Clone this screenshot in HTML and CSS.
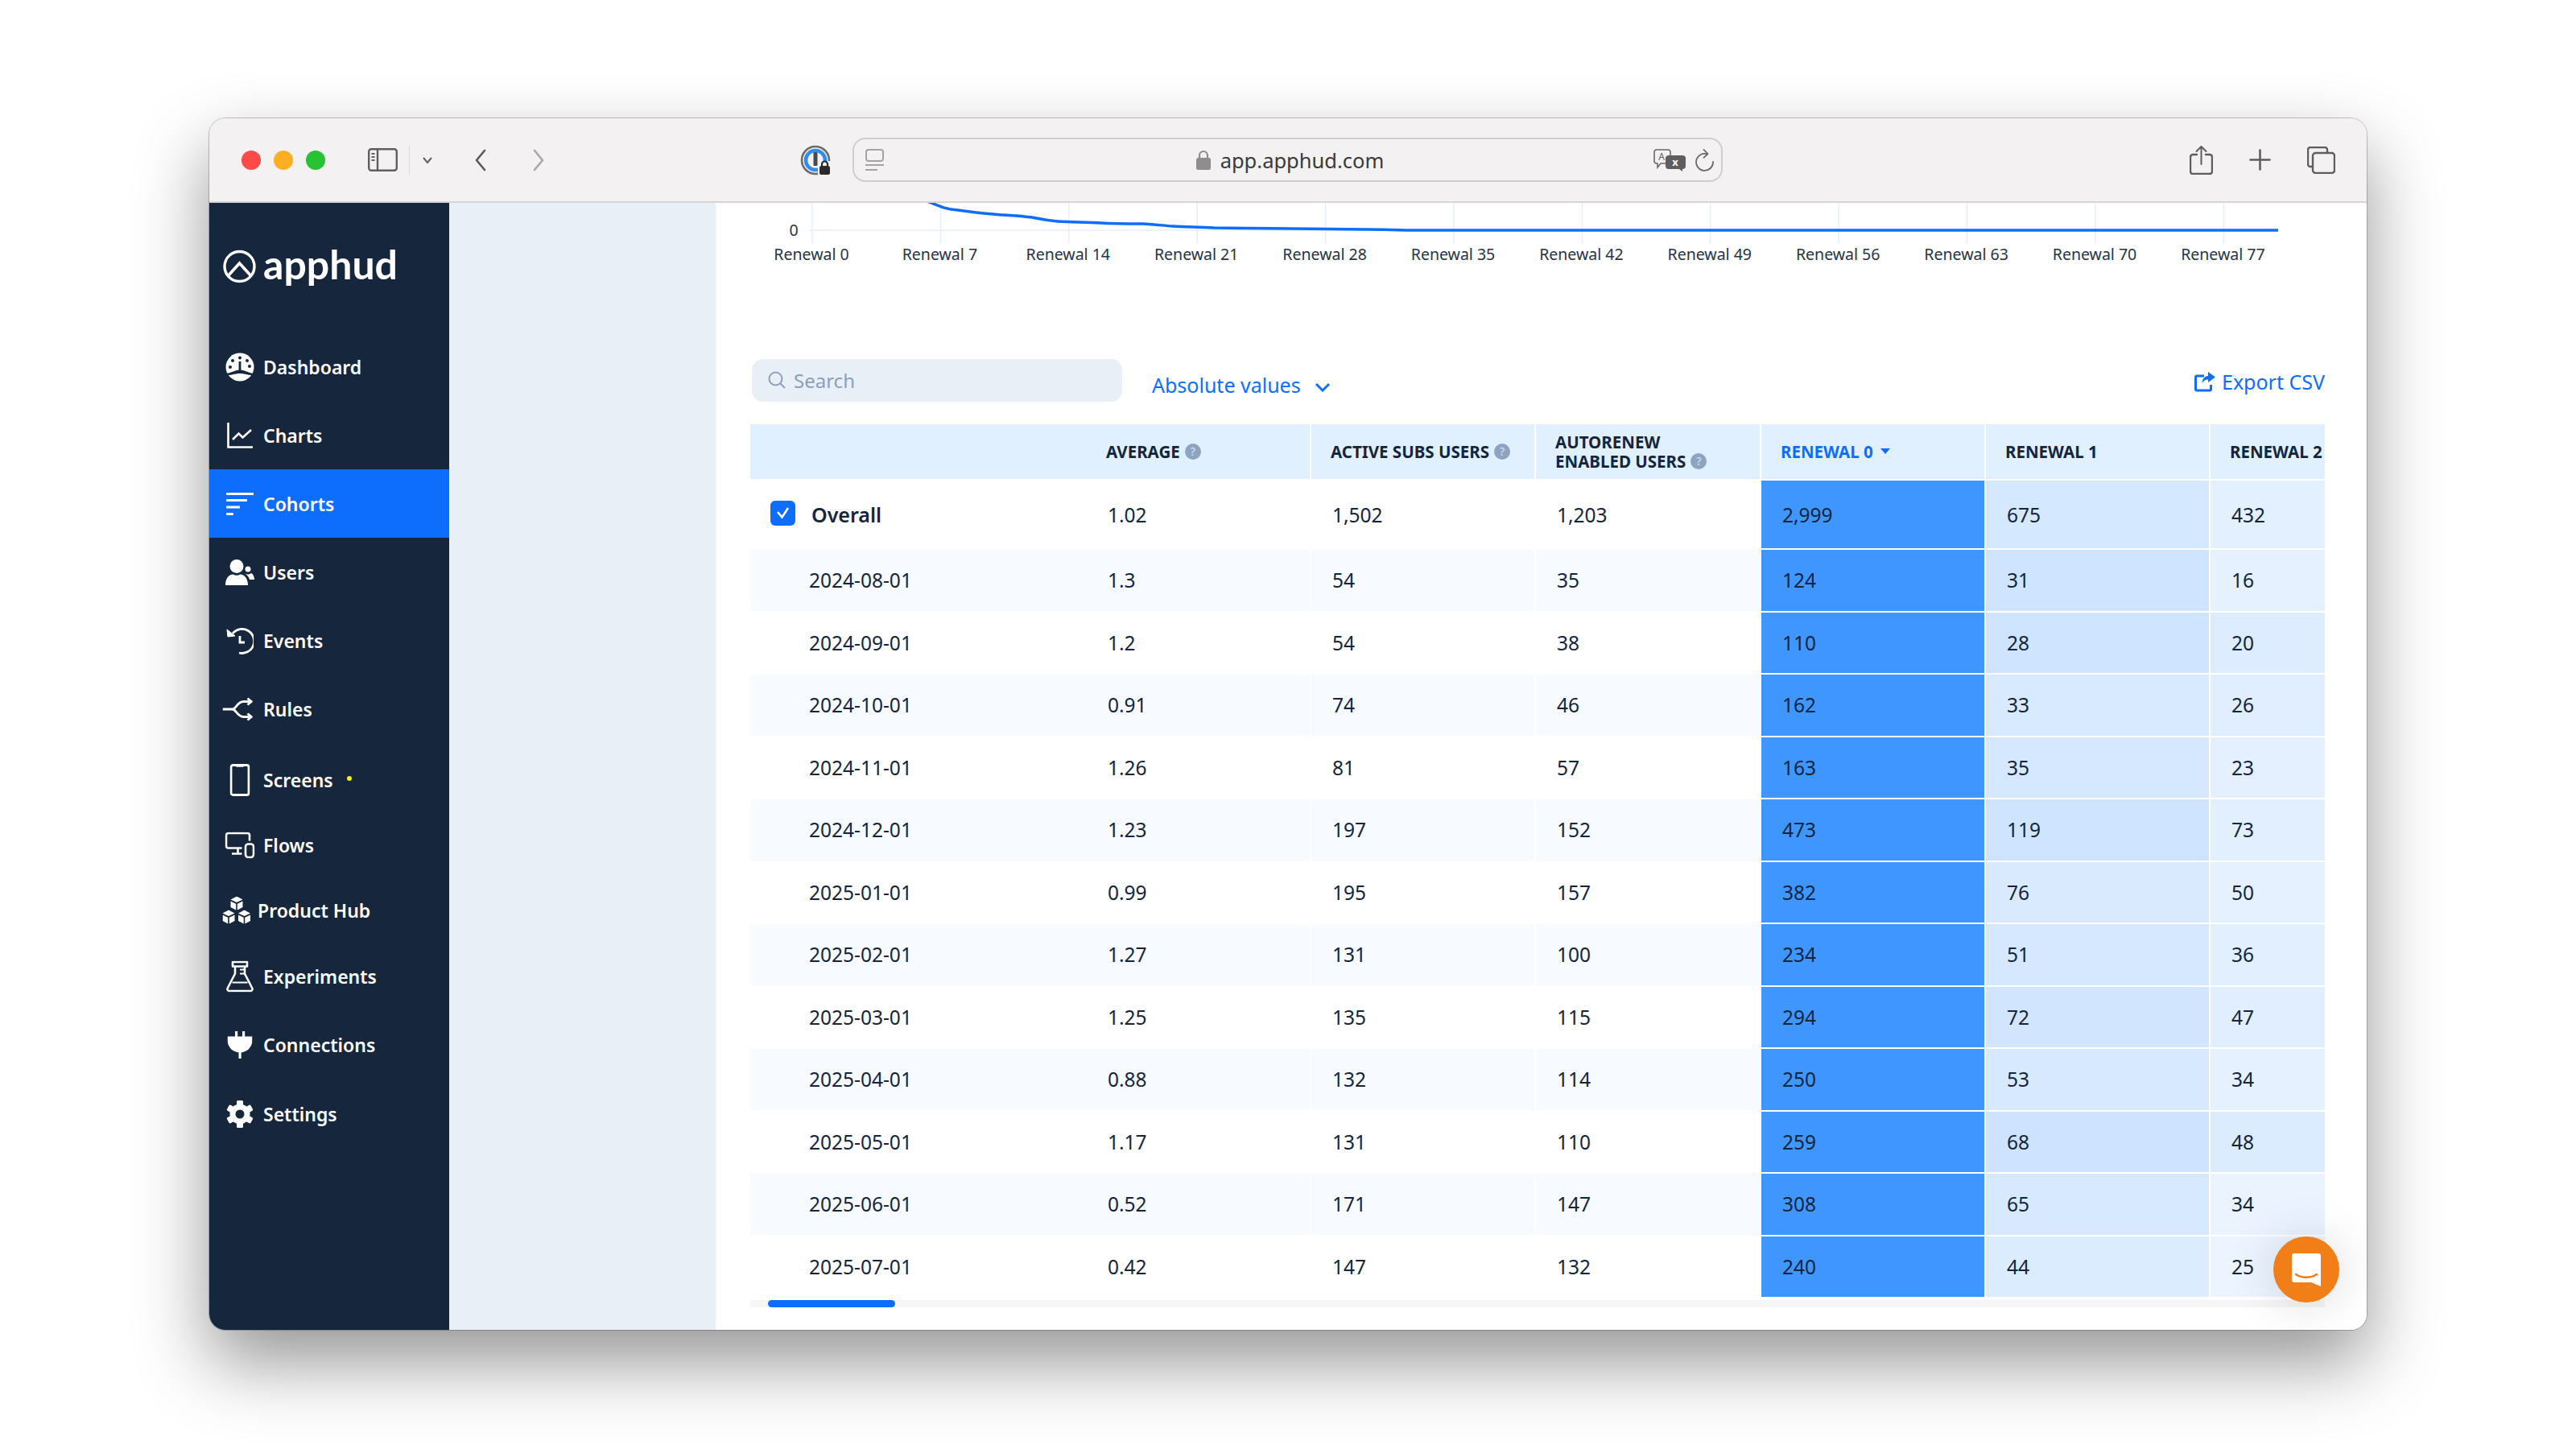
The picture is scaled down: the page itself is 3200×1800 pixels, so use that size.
FILE: index.html
```html
<!DOCTYPE html>
<html lang="en">
<head>
    <meta charset="UTF-8">
    <meta name="viewport" content="width=device-width, initial-scale=1.0">
    <title>Apphud Cohorts</title>
    <link rel="stylesheet" href="styles.css">
</head>
<body>
    <div class="window">
        <header class="toolbar">
            <div class="lights">
                <span class="light light-red"></span>
                <span class="light light-yellow"></span>
                <span class="light light-green"></span>
            </div>
            <svg class="tb-sidebar" width="37" height="29" viewBox="0 0 37 29" fill="none" stroke="#5f5d5d" stroke-width="2.4">
                <rect x="1.2" y="1.2" width="34.6" height="26.6" rx="3"/>
                <path d="M12 1v27"/>
                <path d="M4.5 7h4M4.5 11h4M4.5 15h4" stroke-width="2"/>
            </svg>
            <span class="tb-sep"></span>
            <svg class="tb-caret" width="14" height="10" viewBox="0 0 14 10" fill="none" stroke="#5f5d5d" stroke-width="2"><path d="M2 2l5 6 5-6"/></svg>
            <svg class="tb-back" width="14" height="28" viewBox="0 0 14 28" fill="none" stroke="#5a5858" stroke-width="2.6" stroke-linecap="round" stroke-linejoin="round"><path d="M12 2L2 14l10 12"/></svg>
            <svg class="tb-forward" width="14" height="28" viewBox="0 0 14 28" fill="none" stroke="#a9a7a7" stroke-width="2.6" stroke-linecap="round" stroke-linejoin="round"><path d="M2 2l10 12L2 26"/></svg>
            <svg class="tb-onepass" width="39" height="38" viewBox="0 0 39 38" fill="none">
                <circle cx="19" cy="19" r="17" stroke="#6c6c6c" stroke-width="2.6"/>
                <circle cx="19" cy="19" r="12" stroke="#2d8cf5" stroke-width="4.5"/>
                <rect x="16.5" y="9" width="5" height="17" rx="1" fill="#4a4a4a"/>
                <rect x="22" y="20" width="17" height="18" fill="#f3f1f1"/>
                <path d="M27 27v-3a3.5 3.5 0 0 1 7 0v3" stroke="#2a2a2a" stroke-width="2.2"/>
                <rect x="24" y="26" width="13" height="11" rx="2.5" fill="#2a2a2a"/>
            </svg>
            <div class="urlbar">
                <svg class="reader" width="23" height="27" viewBox="0 0 23 27" fill="none" stroke="#a5a3a3" stroke-width="2">
                    <rect x="1" y="1" width="21" height="14" rx="3"/>
                    <path d="M0 20h23M0 26h15"/>
                </svg>
                <div class="address">
                    <svg width="18" height="25" viewBox="0 0 18 25">
                        <path d="M4 11V7a5 5 0 0 1 10 0v4" fill="none" stroke="#8f8d8d" stroke-width="2.2"/>
                        <rect x="0" y="10" width="18" height="15" rx="2.5" fill="#8f8d8d"/>
                    </svg>
                    <span>app.apphud.com</span>
                </div>
                <div class="url-actions">
                    <svg width="40" height="28" viewBox="0 0 40 28">
                        <path d="M4 1h14a3 3 0 0 1 3 3v11a3 3 0 0 1-3 3H9l-4 5v-5H4a3 3 0 0 1-3-3V4a3 3 0 0 1 3-3z" fill="none" stroke="#6a6868" stroke-width="1.6"/>
                        <text x="10" y="14" class="tr-a">A</text>
                        <path d="M19 8h17a4 4 0 0 1 4 4v9a4 4 0 0 1-4 4v3l-4-3H19a4 4 0 0 1-4-4v-9a4 4 0 0 1 4-4z" fill="#5f5d5d"/>
                        <text x="27" y="21" class="tr-x">x</text>
                    </svg>
                    <svg width="25" height="28" viewBox="0 0 25 28" fill="none" stroke="#6a6868" stroke-width="1.8" stroke-linecap="round" stroke-linejoin="round">
                        <path d="M16 6.5A10.5 10.5 0 1 0 23 16"/>
                        <path d="M11.5 1l5 5.2-5 4.6"/>
                    </svg>
                </div>
            </div>
            <svg class="tb-share" width="29" height="37" viewBox="0 0 29 37" fill="none" stroke="#5f5d5d" stroke-width="2.4" stroke-linecap="round" stroke-linejoin="round">
                <path d="M9 12H4a3 3 0 0 0-3 3v18a3 3 0 0 0 3 3h21a3 3 0 0 0 3-3V15a3 3 0 0 0-3-3h-5"/>
                <path d="M14.5 24V2M8.5 8l6-6 6 6" stroke-width="2"/>
            </svg>
            <svg class="tb-plus" width="27" height="27" viewBox="0 0 27 27" stroke="#5f5d5d" stroke-width="2.6" stroke-linecap="round"><path d="M13.5 1.5v24M1.5 13.5h24"/></svg>
            <svg class="tb-tabs" width="35" height="34" viewBox="0 0 35 34" fill="none" stroke="#5f5d5d" stroke-width="2.4">
                <path d="M6 25H4a3 3 0 0 1-3-3V4a3 3 0 0 1 3-3h18a3 3 0 0 1 3 3v4"/>
                <rect x="7" y="8" width="27" height="25" rx="3.5"/>
            </svg>
        </header>

        <div class="app">
            <aside class="sidebar">
                <div class="logo">
                    <svg width="41" height="42" viewBox="0 0 41 42" fill="none" stroke="#fff">
                        <circle cx="20.5" cy="21" r="18.5" stroke-width="3.4"/>
                        <path d="M6 33L20.5 17 35 33" stroke-width="3.6"/>
                    </svg>
                    <span>apphud</span>
                </div>
                <nav class="nav">
                    <a class="nav-item">
                        <svg width="36" height="36" viewBox="0 0 36 36">
                            <circle cx="18" cy="18" r="17.5" fill="#fff"/>
                            <g fill="#16263d">
                                <circle cx="18" cy="6.5" r="2"/><circle cx="9" cy="10" r="2"/><circle cx="27" cy="10" r="2"/><circle cx="6" cy="18" r="2"/><circle cx="30" cy="17" r="2"/>
                                <rect x="16.6" y="11" width="2.8" height="12"/>
                                <path d="M0 26c7 0 11-4.5 18-4.5S29 26 36 26v2.5c-7 0-11-2.5-18-2.5S7 28.5 0 28.5z"/>
                            </g>
                        </svg>
                        <span>Dashboard</span>
                    </a>
                    <a class="nav-item">
                        <svg width="32" height="32" viewBox="0 0 32 32" fill="none" stroke="#fff" stroke-width="2.6">
                            <path d="M1.5 0v30.5H32"/>
                            <path d="M7 21l7.5-7.5 5 5L30 9"/>
                        </svg>
                        <span>Charts</span>
                    </a>
                    <a class="nav-item is-active">
                        <svg width="36" height="30" viewBox="0 0 36 30" fill="#fff">
                            <rect x="1" y="1" width="34" height="3"/><rect x="1" y="9" width="26" height="3"/><rect x="1" y="17.5" width="17" height="3"/><rect x="1" y="26" width="9" height="3"/>
                        </svg>
                        <span>Cohorts</span>
                    </a>
                    <a class="nav-item">
                        <svg width="36" height="32" viewBox="0 0 36 32" fill="#fff">
                            <circle cx="14" cy="8.5" r="8.5"/>
                            <path d="M0 32c0-8 4-13.5 9.5-13.5Q14 21 18.5 18.5C24 18.5 28 24 28 32z"/>
                            <circle cx="28" cy="12" r="3.5"/>
                            <path d="M23.5 17Q28 20 32 17c2.5 1 4 4.5 4 8h-6c-.5-3-3-6-6.500-8z"/>
                        </svg>
                        <span>Users</span>
                    </a>
                    <a class="nav-item">
                        <svg width="34" height="34" viewBox="0 0 34 34" fill="none" stroke="#fff" stroke-width="2.8">
                            <path d="M8 8A15 15 0 1 1 16 32"/>
                            <path d="M17 11v8h6"/>
                            <path d="M1 3l1 9 9-1z" fill="#fff" stroke-width="1"/>
                        </svg>
                        <span>Events</span>
                    </a>
                    <a class="nav-item nav-rules">
                        <svg width="39" height="29" viewBox="0 0 39 29" fill="none" stroke="#fff" stroke-width="2.8" stroke-linejoin="round">
                            <path d="M0 14.5h13"/>
                            <path d="M12 14.5C17 14.5 18 5 26 5h9M12 14.5C17 14.5 18 24 26 24h9"/>
                            <path d="M31 1l5 4-5 4M31 20l5 4-5 4"/>
                        </svg>
                        <span>Rules</span>
                    </a>
                    <a class="nav-item nav-screens">
                        <svg width="25" height="40" viewBox="0 0 25 40" fill="none" stroke="#fff" stroke-width="2.8">
                            <rect x="1.5" y="1.5" width="22" height="37" rx="2.5"/>
                            <path d="M8 2.5h9" stroke-width="2.4"/>
                        </svg>
                        <span>Screens</span>
                        <i class="dot"></i>
                    </a>
                    <a class="nav-item nav-flows">
                        <svg width="37" height="33" viewBox="0 0 37 33" fill="none" stroke="#fff" stroke-width="2.6">
                            <path d="M21 20H4a2.5 2.5 0 0 1-2.500-2.500V4A2.500 2.500 0 0 1 4 1.500h24A2.500 2.500 0 0 1 30.500 4v7"/>
                            <path d="M16 20v6M8.500 27H21"/>
                            <rect x="25.5" y="15" width="10" height="16.5" rx="3.5"/>
                        </svg>
                        <span>Flows</span>
                    </a>
                    <a class="nav-item nav-hub">
                        <svg width="35" height="35" viewBox="0 0 35 35" fill="#fff">
                            <defs>
                                <g id="cube">
                                    <path d="M0 4L7.5 0 15 4 7.5 7.5z"/>
                                    <path d="M0 6l6.7 3.300V17L0 13.500z"/>
                                    <path d="M15 6L8.300 9.300V17l6.700-3.500z"/>
                                </g>
                            </defs>
                            <use href="#cube" x="10" y="0"/>
                            <use href="#cube" x="0" y="17"/>
                            <use href="#cube" x="19.5" y="17"/>
                        </svg>
                        <span>Product Hub</span>
                    </a>
                    <a class="nav-item nav-experiments">
                        <svg width="34" height="39" viewBox="0 0 34 39" fill="none" stroke="#fff" stroke-width="2.6" stroke-linejoin="round">
                            <path d="M8 1.5h18V7H8z"/>
                            <path d="M11 7v9L2 33.500A2.500 2.500 0 0 0 4.500 37.500h25A2.500 2.500 0 0 0 32 33.500L23 16V7"/>
                            <path d="M7.5 27h19M17 11h6M17 16h6" stroke-width="2.2"/>
                        </svg>
                        <span>Experiments</span>
                    </a>
                    <a class="nav-item nav-tall">
                        <svg width="31" height="34" viewBox="0 0 31 34" fill="#fff">
                            <rect x="9.5" y="0" width="3.2" height="7"/><rect x="18.5" y="0" width="3.2" height="7"/>
                            <path d="M0 6.5h31V11C31 20 24 26.5 15.5 26.5S0 20 0 11z"/>
                            <rect x="14" y="26" width="3.2" height="8"/>
                        </svg>
                        <span>Connections</span>
                    </a>
                    <a class="nav-item nav-tall">
                        <svg width="34" height="34" viewBox="0 0 34 34">
                            <g fill="#fff">
                                <circle cx="17" cy="17" r="12.5"/>
                                <rect x="13" y="0" width="8" height="34" rx="1.5"/>
                                <rect x="13" y="0" width="8" height="34" rx="1.5" transform="rotate(60 17 17)"/>
                                <rect x="13" y="0" width="8" height="34" rx="1.5" transform="rotate(120 17 17)"/>
                            </g>
                            <circle cx="17" cy="17" r="5.5" fill="#16263d"/>
                        </svg>
                        <span>Settings</span>
                    </a>
                </nav>
            </aside>

            <div class="gutter"></div>

            <main class="panel">
                <svg class="chart" width="2051" height="82" viewBox="0 0 2051 82">
                    <g class="grid">
                        <path d="M116 34H1941"/>
                        <path d="M120 0v51M279.400 0v51M438.800 0v51M598.200 0v51M757.600 0v51M917 0v51M1076.400 0v51M1235.800 0v51M1395.200 0v51M1554.600 0v51M1714 0v51M1873.400 0v51"/>
                    </g>
                    <path class="curve" d="M258-4C278 4 285 8 301 9 315 11 330 13 345 14 365 16 380 16 393 18 404 20 410 22 425 23 445 24 460 24 479 25 495 26 515 26 530 26 545 27 555 28 568 29 585 30 600 30 619 31 680 32 750 32 811 33 830 33 850 34 871 34H1941"/>
                    <g class="axis">
                        <text x="97" y="41">0</text>
                        <text x="119" y="71">Renewal 0</text>
                        <text x="278.400" y="71">Renewal 7</text>
                        <text x="437.800" y="71">Renewal 14</text>
                        <text x="597.200" y="71">Renewal 21</text>
                        <text x="756.600" y="71">Renewal 28</text>
                        <text x="916" y="71">Renewal 35</text>
                        <text x="1075.400" y="71">Renewal 42</text>
                        <text x="1234.800" y="71">Renewal 49</text>
                        <text x="1394.200" y="71">Renewal 56</text>
                        <text x="1553.600" y="71">Renewal 63</text>
                        <text x="1713" y="71">Renewal 70</text>
                        <text x="1872.400" y="71">Renewal 77</text>
                    </g>
                </svg>

                <div class="controls">
                    <div class="search">
                        <svg width="22" height="22" viewBox="0 0 22 22" fill="none" stroke="#8ba0bb" stroke-width="2"><circle cx="9.5" cy="9.5" r="8"/><path d="M15 15l6 6"/></svg>
                        <span>Search</span>
                    </div>
                    <a class="mode-select">
                        <span>Absolute values</span>
                        <svg width="20" height="12" viewBox="0 0 20 12" fill="none" stroke="#0d6efd" stroke-width="3"><path d="M2 2l8 8 8-8"/></svg>
                    </a>
                    <a class="export">
                        <svg width="26" height="25" viewBox="0 0 26 25" fill="none" stroke="#0d6efd" stroke-width="3">
                            <path d="M12 5H3a1.5 1.5 0 0 0-1.5 1.5v15A1.5 1.5 0 0 0 3 23h16a1.5 1.5 0 0 0 1.500-1.500V16"/>
                            <path d="M17 0l9 6.500-9 6.500V9.500c-4 0-6 1.500-7.500 5 0-6 3-9 7.500-9.500z" fill="#0d6efd" stroke="none"/>
                        </svg>
                        <span>Export CSV</span>
                    </a>
                </div>

                <div class="table">
                    <div class="row row-head">
                        <div class="cell"></div>
                        <div class="cell"><span>AVERAGE</span><i class="help">?</i></div>
                        <div class="cell"><span>ACTIVE SUBS USERS</span><i class="help">?</i></div>
                        <div class="cell"><span>AUTORENEW<br>ENABLED USERS</span><i class="help help-low">?</i></div>
                        <div class="cell is-sorted"><span>RENEWAL 0</span><i class="sort-arrow"></i></div>
                        <div class="cell"><span>RENEWAL 1</span></div>
                        <div class="cell"><span>RENEWAL 2</span></div>
                    </div>

                    <div class="row row-overall">
                        <div class="cell cell-name"><i class="check"><svg width="31" height="31" viewBox="0 0 31 31" fill="none" stroke="#fff" stroke-width="2.6"><path d="M9 14l5.500 6.500L22 9"/></svg></i><b>Overall</b></div>
                        <div class="cell">1.02</div>
                        <div class="cell">1,502</div>
                        <div class="cell">1,203</div>
                        <div class="cell heat-max">2,999</div>
                        <div class="cell" style="background: rgba(64, 150, 255, 0.225)">675</div>
                        <div class="cell" style="background: rgba(64, 150, 255, 0.144)">432</div>
                    </div>
                    <div class="row">
                        <div class="cell cell-date">2024-08-01</div>
                        <div class="cell">1.3</div>
                        <div class="cell">54</div>
                        <div class="cell">35</div>
                        <div class="cell heat-max">124</div>
                        <div class="cell" style="background: rgba(64, 150, 255, 0.25)">31</div>
                        <div class="cell" style="background: rgba(64, 150, 255, 0.129)">16</div>
                    </div>
                    <div class="row">
                        <div class="cell cell-date">2024-09-01</div>
                        <div class="cell">1.2</div>
                        <div class="cell">54</div>
                        <div class="cell">38</div>
                        <div class="cell heat-max">110</div>
                        <div class="cell" style="background: rgba(64, 150, 255, 0.255)">28</div>
                        <div class="cell" style="background: rgba(64, 150, 255, 0.182)">20</div>
                    </div>
                    <div class="row">
                        <div class="cell cell-date">2024-10-01</div>
                        <div class="cell">0.91</div>
                        <div class="cell">74</div>
                        <div class="cell">46</div>
                        <div class="cell heat-max">162</div>
                        <div class="cell" style="background: rgba(64, 150, 255, 0.204)">33</div>
                        <div class="cell" style="background: rgba(64, 150, 255, 0.16)">26</div>
                    </div>
                    <div class="row">
                        <div class="cell cell-date">2024-11-01</div>
                        <div class="cell">1.26</div>
                        <div class="cell">81</div>
                        <div class="cell">57</div>
                        <div class="cell heat-max">163</div>
                        <div class="cell" style="background: rgba(64, 150, 255, 0.215)">35</div>
                        <div class="cell" style="background: rgba(64, 150, 255, 0.141)">23</div>
                    </div>
                    <div class="row">
                        <div class="cell cell-date">2024-12-01</div>
                        <div class="cell">1.23</div>
                        <div class="cell">197</div>
                        <div class="cell">152</div>
                        <div class="cell heat-max">473</div>
                        <div class="cell" style="background: rgba(64, 150, 255, 0.252)">119</div>
                        <div class="cell" style="background: rgba(64, 150, 255, 0.154)">73</div>
                    </div>
                    <div class="row">
                        <div class="cell cell-date">2025-01-01</div>
                        <div class="cell">0.99</div>
                        <div class="cell">195</div>
                        <div class="cell">157</div>
                        <div class="cell heat-max">382</div>
                        <div class="cell" style="background: rgba(64, 150, 255, 0.199)">76</div>
                        <div class="cell" style="background: rgba(64, 150, 255, 0.131)">50</div>
                    </div>
                    <div class="row">
                        <div class="cell cell-date">2025-02-01</div>
                        <div class="cell">1.27</div>
                        <div class="cell">131</div>
                        <div class="cell">100</div>
                        <div class="cell heat-max">234</div>
                        <div class="cell" style="background: rgba(64, 150, 255, 0.218)">51</div>
                        <div class="cell" style="background: rgba(64, 150, 255, 0.154)">36</div>
                    </div>
                    <div class="row">
                        <div class="cell cell-date">2025-03-01</div>
                        <div class="cell">1.25</div>
                        <div class="cell">135</div>
                        <div class="cell">115</div>
                        <div class="cell heat-max">294</div>
                        <div class="cell" style="background: rgba(64, 150, 255, 0.245)">72</div>
                        <div class="cell" style="background: rgba(64, 150, 255, 0.16)">47</div>
                    </div>
                    <div class="row">
                        <div class="cell cell-date">2025-04-01</div>
                        <div class="cell">0.88</div>
                        <div class="cell">132</div>
                        <div class="cell">114</div>
                        <div class="cell heat-max">250</div>
                        <div class="cell" style="background: rgba(64, 150, 255, 0.212)">53</div>
                        <div class="cell" style="background: rgba(64, 150, 255, 0.136)">34</div>
                    </div>
                    <div class="row">
                        <div class="cell cell-date">2025-05-01</div>
                        <div class="cell">1.17</div>
                        <div class="cell">131</div>
                        <div class="cell">110</div>
                        <div class="cell heat-max">259</div>
                        <div class="cell" style="background: rgba(64, 150, 255, 0.263)">68</div>
                        <div class="cell" style="background: rgba(64, 150, 255, 0.185)">48</div>
                    </div>
                    <div class="row">
                        <div class="cell cell-date">2025-06-01</div>
                        <div class="cell">0.52</div>
                        <div class="cell">171</div>
                        <div class="cell">147</div>
                        <div class="cell heat-max">308</div>
                        <div class="cell" style="background: rgba(64, 150, 255, 0.211)">65</div>
                        <div class="cell" style="background: rgba(64, 150, 255, 0.11)">34</div>
                    </div>
                    <div class="row">
                        <div class="cell cell-date">2025-07-01</div>
                        <div class="cell">0.42</div>
                        <div class="cell">147</div>
                        <div class="cell">132</div>
                        <div class="cell heat-max">240</div>
                        <div class="cell" style="background: rgba(64, 150, 255, 0.183)">44</div>
                        <div class="cell" style="background: rgba(64, 150, 255, 0.104)">25</div>
                    </div>
                </div>

                <div class="scrollbar"><div class="scroll-thumb"></div></div>
            </main>
        </div>

        <button class="chat-btn">
            <svg width="36" height="41" viewBox="0 0 36 41">
                <path d="M3 0h30a3 3 0 0 1 3 3v38l-12-5H3a3 3 0 0 1-3-3V3a3 3 0 0 1 3-3z" fill="#fff"/>
                <path d="M5 26c7 5 19 5 26 0" fill="none" stroke="#f27e17" stroke-width="2.4" stroke-linecap="round"/>
            </svg>
        </button>
    </div>
</body>
</html>
```

FILE: styles.css
```css
:root {
    --blue: #0d6efd;
    --navy: #16263d;
    --text: #14253d;
    --toolbar: #f3f1f1;
    --soft-blue: #e8eff7;
    --head-blue: #e0f0ff;
}

* {
    margin: 0;
    padding: 0;
    box-sizing: border-box;
    font-family: 'Noto Sans', 'Open Sans', sans-serif;
}

body {
    width: 3200px;
    height: 1800px;
    background: white;
    overflow: hidden;
}

a {
    display: flex;
    text-decoration: none;
}

/* Browser window */
.window {
    position: relative;
    display: flex;
    flex-direction: column;
    width: 2680px;
    height: 1505px;
    margin: 147px 0 0 260px;
    border-radius: 20px;
    overflow: hidden;
    box-shadow: 0 0 0 1px rgba(0, 0, 0, 0.22), 0 40px 90px rgba(0, 0, 0, 0.42);
}

.toolbar {
    display: flex;
    align-items: center;
    flex: none;
    height: 105px;
    padding-left: 40px;
    background: var(--toolbar);
    border-bottom: 2px solid #d6d4d4;
}

.lights {
    display: flex;
    gap: 16px;
}

.light {
    width: 24px;
    height: 24px;
    border-radius: 50%;
}

.light-red { background: #fd4a48; }
.light-yellow { background: #fdae22; }
.light-green { background: #27c332; }

.toolbar svg {
    flex: none;
}

.tb-sidebar { margin-left: 53px; }
.tb-sep {
    width: 1px;
    height: 36px;
    margin-left: 14px;
    background: #dddbdb;
}
.tb-caret { margin-left: 15px; }
.tb-back { margin-left: 52px; }
.tb-forward { margin-left: 58px; }
.tb-onepass { margin-left: 318px; }
.tb-share { margin-left: 580px; }
.tb-plus { margin-left: 45px; }
.tb-tabs { margin-left: 45px; }

.urlbar {
    display: grid;
    grid-template-columns: 1fr auto 1fr;
    align-items: center;
    flex: none;
    width: 1081px;
    height: 55px;
    margin-left: 26px;
    padding: 0 8px 0 14px;
    border: 2px solid #cfcdcd;
    border-radius: 16px;
}

.address {
    display: flex;
    align-items: center;
    gap: 12px;
    font-size: 25.5px;
    color: #3a3a3a;
}

.url-actions {
    display: flex;
    align-items: center;
    justify-content: flex-end;
    gap: 11px;
}

.tr-a {
    font-size: 12px;
    fill: #5f5d5d;
    text-anchor: middle;
}

.tr-x {
    font-size: 13px;
    font-weight: 700;
    fill: white;
    text-anchor: middle;
}

/* App layout */
.app {
    display: flex;
    flex: 1;
    min-height: 0;
}

.sidebar {
    flex: none;
    width: 298px;
    background: var(--navy);
}

.logo {
    display: flex;
    align-items: center;
    gap: 9px;
    height: 42px;
    margin: 58px 0 61px 17px;
}

.logo span {
    padding-bottom: 7px;
    font-family: 'Lato', sans-serif;
    font-size: 50px;
    font-weight: 700;
    line-height: 42px;
    color: white;
}

.nav {
    display: flex;
    flex-direction: column;
}

.nav-item {
    position: relative;
    align-items: center;
    height: 85px;
    padding-left: 67px;
    font-size: 23px;
    font-weight: 600;
    color: white;
}

.nav-item svg {
    position: absolute;
    left: 38px;
    top: 50%;
    transform: translate(-50%, -50%);
}

.nav-item.is-active {
    background: var(--blue);
}

.nav-screens {
    height: 82px;
    margin-top: 5px;
}

.nav-flows { height: 80px; }

.nav-hub {
    height: 82px;
    padding-left: 60px;
}

.nav-hub svg { left: 34px; }

.nav-experiments { height: 82px; }

.nav-tall { margin-top: 1px; }

.nav-rules svg { left: 36px; }

.dot {
    width: 6px;
    height: 6px;
    margin: -4px 0 0 17px;
    border-radius: 50%;
    background: #f5f500;
}

.gutter {
    flex: none;
    width: 331px;
    background: var(--soft-blue);
}

.panel {
    flex: 1;
    min-width: 0;
    padding: 0 52px 0 43px;
    background: white;
    color: var(--text);
}

/* Chart */
.chart {
    display: block;
    margin-left: -43px;
}

.grid {
    fill: none;
    stroke: #e6eff8;
    stroke-width: 1.5;
}

.curve {
    fill: none;
    stroke: var(--blue);
    stroke-width: 3.5;
    stroke-linejoin: round;
}

.axis {
    font-size: 19.5px;
    fill: #253449;
    text-anchor: middle;
}

/* Search and export row */
.controls {
    display: flex;
    align-items: flex-start;
    height: 53px;
    margin: 112px 0 28px 2px;
}

.search {
    display: flex;
    align-items: center;
    gap: 10px;
    width: 460px;
    height: 53px;
    padding: 0 0 1px 20px;
    background: var(--soft-blue);
    border-radius: 14px;
    font-size: 24px;
    color: #8ba0bb;
}

.mode-select {
    align-items: center;
    gap: 17px;
    margin: 16px 0 0 37px;
    font-size: 25px;
    line-height: 32px;
    color: var(--blue);
}

.mode-select svg {
    margin-top: 5px;
}

.export {
    align-items: center;
    gap: 8px;
    margin: 12px 0 0 auto;
    font-size: 25px;
    line-height: 32px;
    color: var(--blue);
}

/* Cohort table */
.table {
    width: 1956px;
    overflow: hidden;
}

.row {
    display: grid;
    grid-template-columns: 418px 279px 279px 280px 279px 279px 142px;
    height: 77.5px;
    font-size: 24.5px;
}

.row:nth-child(odd):not(.row-head) .cell:nth-child(-n+4) {
    background: #f7fbff;
}

.cell {
    display: flex;
    align-items: center;
    padding-left: 26px;
    border-right: 2px solid white;
    border-bottom: 2px solid white;
    white-space: nowrap;
}

.cell:first-child {
    border-right: none;
}

.cell:last-child {
    border-right: none;
}

.cell-date {
    padding-left: 73px;
}

.cell-name {
    padding-left: 25px;
}

.cell-name b {
    margin-left: 20px;
    font-size: 25px;
    font-weight: 600;
}

.check {
    display: block;
    width: 31px;
    height: 31px;
    margin-top: -3px;
    border-radius: 6px;
    background: var(--blue);
}

.check svg {
    display: block;
}

.heat-max {
    background: #4096ff;
}

.row-head {
    height: 70px;
    font-size: 20.5px;
    font-weight: 700;
    line-height: 24px;
}

.row-head .cell {
    padding-left: 24px;
    background: var(--head-blue);
}

.row-overall {
    height: 86px;
}

.is-sorted {
    color: var(--blue);
}

.help {
    display: block;
    flex: none;
    width: 20px;
    height: 20px;
    margin-left: 6px;
    border-radius: 50%;
    background: #8da3c2;
    font-size: 14px;
    font-style: normal;
    font-weight: 400;
    line-height: 20px;
    text-align: center;
    color: #dbe6f3;
}

.help-low {
    margin-top: 24px;
}

.sort-arrow {
    width: 0;
    height: 0;
    margin: -2px 0 0 9px;
    border-top: 7px solid var(--blue);
    border-left: 6px solid transparent;
    border-right: 6px solid transparent;
}

/* Horizontal scrollbar */
.scrollbar {
    width: 1956px;
    height: 9px;
    margin-top: 2px;
    background: #f6f6f6;
}

.scroll-thumb {
    width: 158px;
    height: 9px;
    margin-left: 22px;
    border-radius: 5px;
    background: var(--blue);
}

/* Chat launcher */
.chat-btn {
    position: absolute;
    right: 34px;
    bottom: 34px;
    display: flex;
    align-items: center;
    justify-content: center;
    width: 82px;
    height: 82px;
    border: none;
    border-radius: 50%;
    background: #f27e17;
    box-shadow: 0 2px 60px rgba(0, 0, 0, 0.15);
}
```
